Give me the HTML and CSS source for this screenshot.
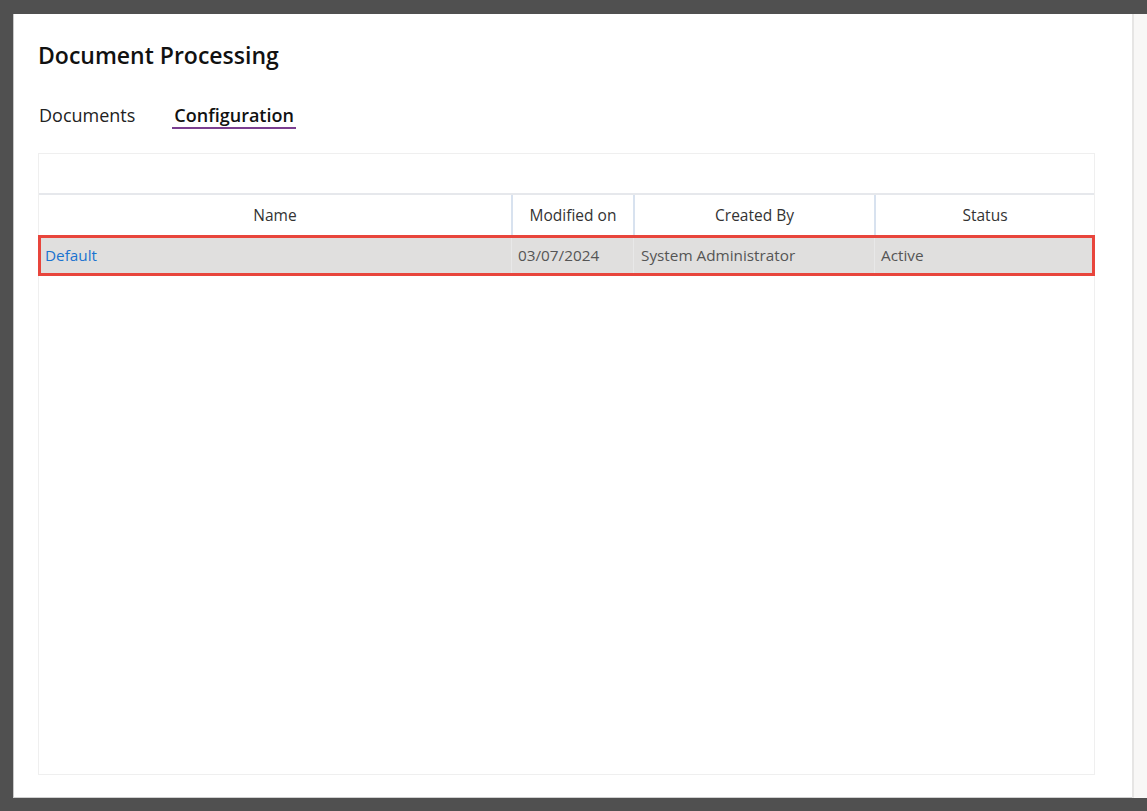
FILE: index.html
```html
<!DOCTYPE html>
<html>
<head>
<meta charset="utf-8">
<link rel="stylesheet" href="styles.css">
</head>
<body>
<div class="frame">
  <div class="panel">
    <h1 class="title">Document Processing</h1>
    <div class="tabs">
      <div class="tab">Documents</div>
      <div class="tab active">Configuration</div>
    </div>
    <div class="grid">
      <div class="toolbar"></div>
      <div class="row head">
        <div class="cell c1">Name</div>
        <div class="cell c2">Modified on</div>
        <div class="cell c3">Created By</div>
        <div class="cell c4">Status</div>
      </div>
      <div class="row data">
        <div class="cell c1"><span class="link">Default</span></div>
        <div class="cell c2">03/07/2024</div>
        <div class="cell c3">System Administrator</div>
        <div class="cell c4">Active</div>
      </div>
    </div>
  </div>
  <div class="side"></div>
</div>
</body>
</html>
```

FILE: styles.css
```css
html, body {
  margin: 0;
  padding: 0;
}
body {
  background: #505050;
  font-family: "Segoe UI", "Open Sans", "Noto Sans", "Liberation Sans", sans-serif;
  color: #222;
}
.frame {
  display: flex;
  height: 811px;
  box-sizing: border-box;
  padding: 14px 0 13px 13px;
}
.panel {
  flex: 1;
  background: #fff;
  border-left: 1px solid #c8c8c8;
  border-bottom: 1px solid #d0d0d0;
  padding: 25px 37px 22px 24px;
  display: flex;
  flex-direction: column;
}
.side {
  flex: 0 0 13px;
  background: #f8f7f6;
  border-left: 2px solid #e6e5e4;
}
.title {
  margin: 0;
  font-size: 23px;
  font-weight: 600;
  line-height: 32px;
  color: #111;
}
.tabs {
  display: flex;
  gap: 36px;
  margin-top: 33px;
}
.tab {
  font-size: 18px;
  line-height: 22px;
  padding: 0 1px 1px;
  color: #222;
  border-bottom: 2px solid transparent;
}
.tab.active {
  font-weight: 600;
  color: #111;
  border-bottom-color: #7a3d8f;
  padding: 0 2px 1px;
}
.grid {
  margin-top: 24px;
  flex: 1;
  border: 1px solid #efefef;
  display: flex;
  flex-direction: column;
}
.toolbar {
  height: 39px;
  border-bottom: 2px solid #e6e8ec;
}
.row {
  display: grid;
  grid-template-columns: 472px 122px 241px 1fr;
}
.head .cell {
  height: 40px;
  line-height: 40px;
  text-align: center;
  font-size: 15.5px;
  color: #333;
  border-left: 2px solid #d8e2ef;
}
.head .c1 { border-left: none; }
.data {
  background: #e0dfde;
  outline: 3px solid #e8453c;
  outline-offset: -3px;
  margin: 0 -1px;
  padding: 0 1px;
  height: 41px;
}
.data .cell {
  line-height: 41px;
  font-size: 15.3px;
  color: #555;
  padding-left: 6px;
  border-left: 1px solid #e8e8e8;
}
.data .c1 { border-left: none; }
.data .c3 { padding-left: 7px; }
.link {
  color: #1a73d0;
}
```
